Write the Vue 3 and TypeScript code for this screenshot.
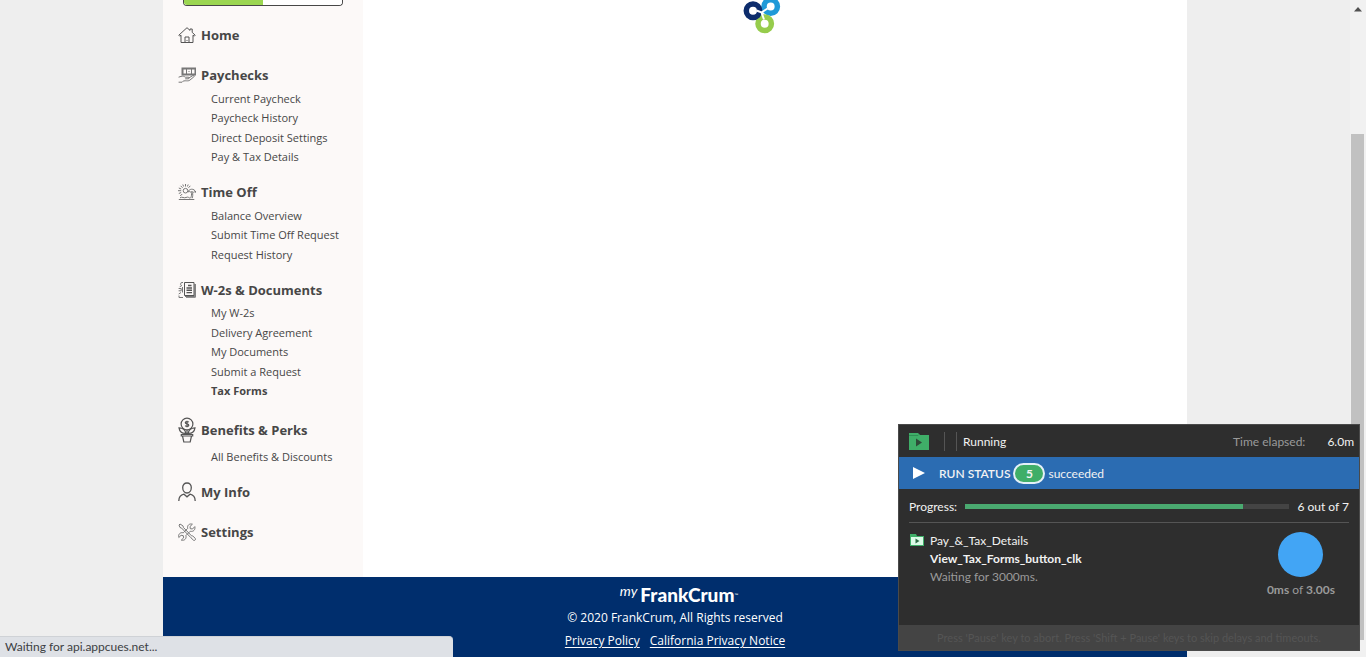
<script setup lang="ts">
interface NavGroup {
  title: string
  icon: string
  items: string[]
}

const groups: NavGroup[] = [
  { title: 'Home', icon: 'home', items: [] },
  {
    title: 'Paychecks',
    icon: 'pay',
    items: ['Current Paycheck', 'Paycheck History', 'Direct Deposit Settings', 'Pay & Tax Details'],
  },
  { title: 'Time Off', icon: 'time', items: ['Balance Overview', 'Submit Time Off Request', 'Request History'] },
  {
    title: 'W-2s & Documents',
    icon: 'docs',
    items: ['My W-2s', 'Delivery Agreement', 'My Documents', 'Submit a Request', 'Tax Forms'],
  },
  { title: 'Benefits & Perks', icon: 'perks', items: ['All Benefits & Discounts'] },
  { title: 'My Info', icon: 'info', items: [] },
  { title: 'Settings', icon: 'settings', items: [] },
]
const current = 'Tax Forms'
const run = { done: 6, total: 7, succeeded: 5 }
</script>

<template>
  <div class="page">
    <main class="container">
      <aside class="sidebar">
        <progress class="profile" value="50" max="100" aria-label="Profile completion"></progress>
        <nav>
          <section
            v-for="g in groups"
            :key="g.title"
            class="group"
            :class="{ listed: g.items.length > 0 }"
          >
            <a href="#" class="heading" :class="{ tall: g.icon === 'perks' }">
              <svg v-if="g.icon === 'home'" class="icon" viewBox="0 0 18 18">
                <path d="M.8 9.200 9 1.700l3 2.700V3h2.200v3.400l3 2.800-1 1-1.200-1v7.300H3V9.200l-1.200 1z" />
                <path d="M7 16.500v-5.500h4v5.500M8.500 14.500h1" />
              </svg>
              <svg v-else-if="g.icon === 'pay'" class="icon light" viewBox="0 0 18 18">
                <path d="M4.500 2.500h13v6h-13z" class="note" />
                <path d="M8.500 2.500v6M13.500 2.500v6M10.500 5.500h1" />
                <path d="M.6 11.200 3 10.400c2-.6 3.200 0 4.400.8h2.700c1.600 0 1.400 1.500 0 1.600H7.200M10.800 12l4-2.400c1.300-.6 2 .4 1.100 1.200l-4.100 3.400c-1.300.9-3 .6-4.600.6-2 0-2.400.6-3.200 1.400H.6" />
              </svg>
              <svg v-else-if="g.icon === 'time'" class="icon light" viewBox="0 0 18 18">
                <circle cx="7.500" cy="7.700" r="2.300" />
                <path d="M7.500 1v2.500M2.600 2.800l2 2M0 7.700h3.200M2.200 13l2-2M12.300 2.800l-1.800 2M4.800 1.500l.8 2M10.200 1.500l-.8 2M.8 5l2.400 1M.8 10.500l2.400-1" />
                <path d="M10 9c.6-3 6-4.500 8 .4-1.200-.9-2-.6-2.700 0-.9-1-1.800-1-2.700-.4-1-.6-1.800-.5-2.600 0M13.300 9.200c.5 2 .3 4-.7 6M14.500 9.400c.4 2 .3 4-.3 5.800" />
                <path d="M.8 16.500h15.500M2 14.800c2-1.600 4 .8 6-.3s3 .3 4 .8" />
              </svg>
              <svg v-else-if="g.icon === 'docs'" class="icon" viewBox="0 0 18 18">
                <path d="M6.500 1.500h9.500v13H6.500z" />
                <path d="M17.400 3v13.300H8M16.700 3v12.500H7" class="soft" />
                <path d="M10 4.500h3.500M8.500 7h5.500M8.500 9.300h5.500M8.500 11.600h5.500" class="thick" />
                <path d="M5 1.500H3.300l-.8 1.800 1.200 1.400-2 1M.6 7.500h2.600v2.300H.6M4.500 6v5.500M3 11.500l-2.300 1.500M1 14.500v2h4" class="soft" />
              </svg>
              <svg v-else-if="g.icon === 'perks'" class="icon plant" viewBox="0 0 18 26">
                <circle cx="9" cy="7" r="5.900" />
                <path d="M10.800 5.200c-1-1-3.500-.8-3.500.5 0 1.500 3.500.8 3.500 2.500 0 1.400-2.600 1.500-3.700.4M9 3.800v6.400" />
                <path d="M7.800 16.300C4 16.500 1.500 14 1 10.800c3.800.1 6.300 1.700 6.800 5.500zM10.200 16.300c3.800.2 6.300-2.300 6.800-5.500-3.800.1-6.300 1.700-6.800 5.500zM9 13v5" />
                <path d="M3.300 17.500h11.400v1.500H3.300zM4.500 19l1.300 6h6.400l1.300-6" />
              </svg>
              <svg v-else-if="g.icon === 'info'" class="icon person" viewBox="0 0 18 20">
                <path d="M9 1c-2.600 0-4.300 1.700-4.300 4.600S6.500 11 9 11s4.300-2.500 4.300-5.400S11.600 1 9 1z" />
                <path d="M.8 19c0-4 1.700-6 5.200-6.800L9 14.800l3-2.600c3.500.8 5.200 2.800 5.200 6.800" />
              </svg>
              <svg v-else class="icon light" viewBox="0 0 18 18">
                <path d="M2 1 1 2l1 2.500 1.600.6L13 14.800l2.600 2.500c1 .7 2.500-.8 1.700-1.900L14.800 13l-1.300-.2-8-8.200-.6-1.800z" />
                <path d="M16.800 3.600 14.500 6l-2.200-.3L12 3.500l2.400-2.300c-3-1-5.500 1.200-4.700 4.200L5.300 9.800c-3-.8-5.400 1.500-4.500 4.700l2.300-2.200 2.200.4.300 2.200-2.300 2.200c3.200.9 5.400-1.500 4.600-4.500l4.400-4.400c3 .9 5.300-1.500 4.500-4.600z" />
              </svg>
              <span>{{ g.title }}</span>
            </a>
            <ul v-if="g.items.length">
              <li v-for="item in g.items" :key="item">
                <a href="#" :class="{ active: item === current }">{{ item }}</a>
              </li>
            </ul>
          </section>
        </nav>
      </aside>
      <section class="content" aria-label="Loading">
        <svg class="loader" viewBox="0 0 38 35">
          <g fill="none" stroke-width="5.500">
            <circle cx="27.700" cy="6.500" r="6.700" stroke="#1f9ad8" />
            <circle cx="21.700" cy="23.700" r="6.700" stroke="#96cc4c" />
            <circle cx="10" cy="10.700" r="6.700" stroke="#0d2c6c" />
          </g>
          <path d="m13.500 10.500 5 2 6-4M18.500 12.500l2.500 7" fill="none" stroke="#fff" stroke-width="2" />
        </svg>
      </section>
    </main>

    <footer class="footer">
      <div class="logo"><i>my</i><b>FrankCrum</b><small>™</small></div>
      <p>© 2020 FrankCrum, All Rights reserved</p>
      <p class="links">
        <a href="#">Privacy Policy</a>
        <a href="#">California Privacy Notice</a>
      </p>
    </footer>
  </div>

  <div class="scrollbar">
    <svg viewBox="0 0 16 18"><path d="M4 11.500 8 7l4 4.500z" /></svg>
    <div class="thumb"></div>
  </div>

  <div class="browser-status">Waiting for api.appcues.net...</div>

  <section class="runner">
    <header class="run-head">
      <svg class="folder" viewBox="0 0 20 17">
        <path d="M0 0h9l2 2h9v15H0z" fill="#3fae68" />
        <path d="M0 2.500h9l1-1" fill="none" stroke="#2f8f54" />
        <path d="m7 5.500 6 4-6 4z" fill="#2e4a38" />
      </svg>
      <span class="rules"></span>
      <span class="state">Running</span>
      <span class="label">Time elapsed:</span>
      <span class="elapsed">6.0m</span>
    </header>
    <div class="run-status">
      <svg class="play" viewBox="0 0 12 12"><path d="M0 0l12 6-12 6z" fill="#fff" /></svg>
      <span class="status-name">RUN STATUS</span>
      <span class="count">{{ run.succeeded }}</span>
      <span>succeeded</span>
    </div>
    <div class="run-progress">
      <label for="run-bar">Progress:</label>
      <progress id="run-bar" :value="run.done" :max="run.total"></progress>
      <span>{{ run.done }} out of {{ run.total }}</span>
    </div>
    <div class="run-body">
      <svg class="mini" viewBox="0 0 14 12">
        <path d="M0 0h6l1 2h7v10H0z" fill="#3fae68" />
        <path d="M1 3h12v8H1z" fill="#dcfbe8" />
        <path d="m5.500 4.500 4 2.500-4 2.500z" fill="#2d6b45" />
      </svg>
      <div class="task">
        <div>Pay_&amp;_Tax_Details</div>
        <div class="step">View_Tax_Forms_button_clk</div>
        <div class="muted">Waiting for 3000ms.</div>
      </div>
      <div class="timer">
        <div class="disc"></div>
        <div><b>0ms</b> of <b>3.00s</b></div>
      </div>
    </div>
    <footer class="run-foot">Press 'Pause' key to abort. Press 'Shift + Pause' keys to skip delays and timeouts.</footer>
  </section>
</template>

<style>
body {
  margin: 0;
  background: #eeeeee;
}
</style>

<style scoped>
* {
  box-sizing: border-box;
}
.page {
  font-family: "Open Sans", "Noto Sans", sans-serif;
  font-size: 12px;
}
.runner,
.browser-status {
  font-family: "Segoe UI", Lato, sans-serif;
  font-size: 12px;
}
.page {
  display: flex;
  flex-direction: column;
  min-height: 100vh;
  margin-right: 16px;
}
.container,
.footer {
  width: 100%;
  max-width: 1024px;
  margin: 0 auto;
}
.container {
  flex: 1;
  display: flex;
  background: #fff;
}
.sidebar {
  flex: none;
  width: 200px;
  background: #fcf9f8;
  color: #474747;
}
progress {
  appearance: none;
  display: block;
  border: 0;
}
.profile {
  width: 160px;
  height: 6px;
  margin: 0 20px 17px;
  border: 1px solid #474747;
  border-top: 0;
  border-radius: 0 0 4px 4px;
  overflow: hidden;
  background: #fff;
}
.profile::-webkit-progress-bar {
  background: #fff;
}
.profile::-webkit-progress-value {
  background: #9bd651;
}
.group {
  margin-bottom: 16px;
}
.group.listed {
  margin-bottom: 13px;
}
.heading {
  display: flex;
  align-items: center;
  gap: 5px;
  height: 24px;
  padding-left: 15px;
  color: inherit;
  font-size: 13px;
  font-weight: 700;
  text-decoration: none;
}
.heading.tall {
  height: 32px;
}
.icon {
  flex: none;
  width: 18px;
  height: 18px;
  fill: none;
  stroke: #555;
  stroke-width: 1;
}
.icon.light {
  stroke: #777;
}
.icon .soft {
  stroke: #777;
}
.icon .note {
  stroke-width: 2;
}
.icon .thick {
  stroke-width: 1.4;
}
.icon.plant {
  height: 26px;
  stroke-width: 1.2;
}
.icon.person {
  height: 20px;
  stroke-width: 1.3;
}
ul {
  margin: 2px 0 0;
  padding: 0 0 0 48px;
  list-style: none;
}
.heading.tall + ul {
  margin-top: 1px;
}
li {
  display: grid;
  align-items: center;
  height: 1.5em;
  font-size: 13px;
  line-height: 1.5;
}
li a {
  color: inherit;
  font-size: 11px;
  text-decoration: none;
}
.active {
  font-weight: 700;
}
.content {
  flex: 1;
  display: flex;
  justify-content: center;
  align-items: flex-start;
}
.loader {
  width: 38px;
  height: 35px;
  margin-right: 27px;
}
.footer {
  display: flex;
  flex-direction: column;
  align-items: center;
  height: 80px;
  padding-top: 7px;
  background: #002e6d;
  color: #fff;
}
.footer p {
  margin: 0;
  line-height: 23px;
}
.logo {
  display: flex;
  align-items: flex-start;
  height: 22px;
  margin-left: 8px;
  font-family: Lato, sans-serif;
  line-height: 22px;
}
.logo i {
  margin-right: 3px;
  font-size: 14px;
  line-height: 14px;
}
.logo b {
  font-size: 19px;
  font-weight: 900;
}
.logo small {
  font-size: 5px;
}
.footer .links {
  display: flex;
  gap: 10px;
}
.footer a {
  color: #fff;
  text-underline-offset: 2px;
}
.scrollbar {
  position: fixed;
  top: 0;
  right: 0;
  bottom: 0;
  display: flex;
  flex-direction: column;
  width: 16px;
  padding: 0 2px 17px 1px;
  background: #f1f1f1;
}
.scrollbar svg {
  width: 16px;
  height: 18px;
  margin-left: -1px;
  fill: #505050;
}
.thumb {
  flex: 1;
  margin-top: 116px;
  background: #c1c1c1;
}
.browser-status {
  position: fixed;
  left: 0;
  bottom: 0;
  width: 453px;
  height: 21px;
  padding-left: 5px;
  border-top: 1px solid #cfd2d6;
  border-radius: 0 4px 0 0;
  background: #dee1e6;
  color: #3c4043;
  line-height: 20px;
}
.runner {
  position: fixed;
  right: 6px;
  bottom: 6px;
  width: 462px;
  border: 1px solid #4a4a4a;
  background: #2e2e2e;
  color: #f2f2f2;
}
.run-head {
  display: flex;
  align-items: center;
  height: 32px;
  padding: 0 5px 0 10px;
}
.folder {
  width: 20px;
  height: 17px;
}
.rules {
  width: 13px;
  height: 19px;
  margin: 0 6px 0 15px;
  border: solid #555;
  border-width: 0 1px;
}
.label {
  margin-left: auto;
  color: #9a9a9a;
}
.elapsed {
  margin-left: 22px;
}
.run-status {
  display: flex;
  align-items: center;
  height: 32px;
  padding-left: 14px;
  background: #2b6cb2;
}
.play {
  width: 12px;
  height: 12px;
}
.status-name {
  margin: 0 3px 0 14px;
  font-weight: 600;
}
.count {
  width: 32px;
  height: 21px;
  margin-right: 3px;
  border: 2px solid #e4f0f8;
  border-radius: 11px;
  background: #3fae68;
  font-weight: 700;
  line-height: 17px;
  text-align: center;
}
.run-progress {
  display: flex;
  align-items: center;
  gap: 8px;
  height: 34px;
  margin: 0 10px;
  padding-top: 2px;
  border-bottom: 1px solid #555;
}
.run-progress progress {
  flex: 1;
  min-width: 0;
  height: 5px;
}
.run-progress progress::-webkit-progress-bar {
  background: #444;
}
.run-progress progress::-webkit-progress-value {
  background: #4aa970;
}
.run-body {
  display: flex;
  align-items: flex-start;
  height: 102px;
  padding: 9px 24px 0 11px;
  line-height: 18px;
}
.mini {
  width: 14px;
  height: 12px;
  margin: 2px 6px 0 0;
}
.step {
  font-weight: 700;
}
.muted {
  color: #9a9a9a;
}
.timer {
  display: flex;
  flex-direction: column;
  align-items: center;
  gap: 4px;
  margin-left: auto;
  color: #9a9a9a;
}
.timer b {
  font-weight: 700;
}
.disc {
  width: 45px;
  height: 45px;
  border-radius: 50%;
  background: #42a5f5;
}
.run-foot {
  height: 25px;
  background: #444444;
  color: #555555;
  font-size: 11px;
  line-height: 25px;
  text-align: center;
}
</style>
